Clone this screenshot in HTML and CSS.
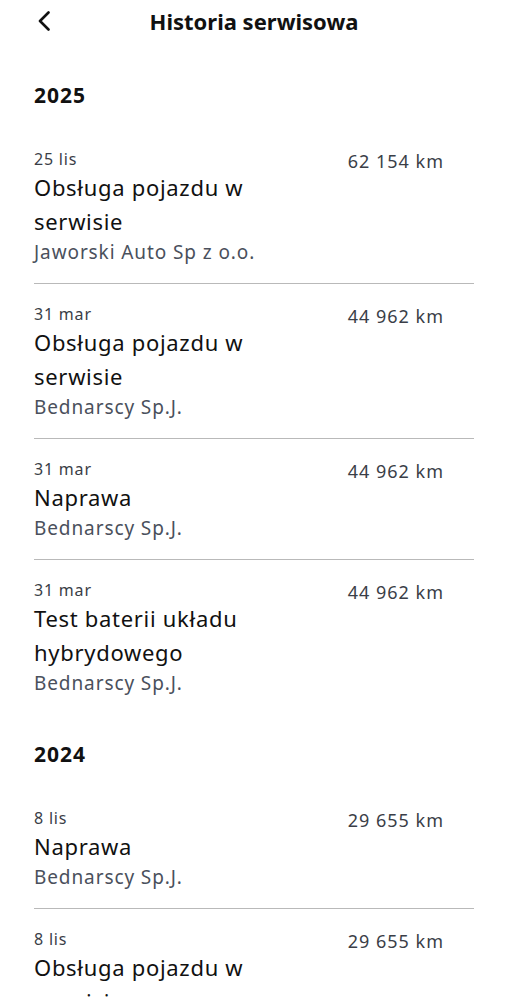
FILE: index.html
```html
<!DOCTYPE html>
<html lang="pl">
<head>
<meta charset="utf-8">
<title>Historia serwisowa</title>
<link rel="stylesheet" href="styles.css">
</head>
<body>
<header class="topbar">
  <button class="back" aria-label="Wstecz">
    <svg width="14" height="20" viewBox="0 0 14 20"><path d="M11.5 1.5 L3 10 L11.5 18.5" fill="none" stroke="#111" stroke-width="2.6" stroke-linecap="round" stroke-linejoin="round"/></svg>
  </button>
  <h1 class="title">Historia serwisowa</h1>
  <span></span>
</header>

<section class="year">
  <h2 class="year-label first">2025</h2>
  <ul class="list">
    <li class="item">
      <div class="info">
        <div class="date">25 lis</div>
        <div class="name">Obsługa pojazdu w serwisie</div>
        <div class="shop">Jaworski Auto Sp z o.o.</div>
      </div>
      <div class="km">62 154 km</div>
    </li>
    <li class="item">
      <div class="info">
        <div class="date">31 mar</div>
        <div class="name">Obsługa pojazdu w serwisie</div>
        <div class="shop">Bednarscy Sp.J.</div>
      </div>
      <div class="km">44 962 km</div>
    </li>
    <li class="item">
      <div class="info">
        <div class="date">31 mar</div>
        <div class="name">Naprawa</div>
        <div class="shop">Bednarscy Sp.J.</div>
      </div>
      <div class="km">44 962 km</div>
    </li>
    <li class="item">
      <div class="info">
        <div class="date">31 mar</div>
        <div class="name">Test baterii układu hybrydowego</div>
        <div class="shop">Bednarscy Sp.J.</div>
      </div>
      <div class="km">44 962 km</div>
    </li>
  </ul>
</section>

<section class="year">
  <h2 class="year-label">2024</h2>
  <ul class="list">
    <li class="item">
      <div class="info">
        <div class="date">8 lis</div>
        <div class="name">Naprawa</div>
        <div class="shop">Bednarscy Sp.J.</div>
      </div>
      <div class="km">29 655 km</div>
    </li>
    <li class="item">
      <div class="info">
        <div class="date">8 lis</div>
        <div class="name">Obsługa pojazdu w serwisie</div>
        <div class="shop">Bednarscy Sp.J.</div>
      </div>
      <div class="km">29 655 km</div>
    </li>
  </ul>
</section>
</body>
</html>
```
FILE: styles.css
```css
* { box-sizing: border-box; }
html, body { margin: 0; padding: 0; background: #fff; }
body {
  font-family: "Noto Sans", "Open Sans", sans-serif;
  color: #111;
  padding: 0 34px;
  height: 998px;
  overflow: hidden;
}
.topbar {
  height: 42px;
  display: grid;
  grid-template-columns: 60px 1fr 60px;
  align-items: center;
}
.back {
  background: none;
  border: 0;
  padding: 0 0 0 3px;
  margin: 0;
  height: 20px;
  display: flex;
  align-items: center;
  justify-content: flex-start;
  cursor: pointer;
}
.title {
  margin: 0;
  text-align: center;
  font-size: 22px;
  font-weight: 700;
  line-height: 28px;
}
.year-label {
  margin: 25px 0 19px;
  font-size: 21px;
  font-weight: 700;
  line-height: 30px;
  letter-spacing: 1px;
}
.year-label.first { margin-top: 38px; }
.list { list-style: none; margin: 0; padding: 0; }
.item {
  display: grid;
  grid-template-columns: 260px 1fr;
  align-items: start;
  padding: 19px 30px 18px 0;
  border-bottom: 1px solid #b9b9b9;
}
.list .item:last-child { border-bottom: 0; }
.date {
  font-size: 16px;
  line-height: 22px;
  letter-spacing: 0.8px;
  color: #3a3e47;
}
.name {
  font-size: 22px;
  line-height: 34px;
  letter-spacing: 0.7px;
  color: #111;
}
.shop {
  margin-top: 1px;
  font-size: 19px;
  line-height: 26px;
  letter-spacing: 0.9px;
  color: #4a505c;
}
.km {
  margin-top: 2px;
  text-align: right;
  font-size: 18px;
  line-height: 22px;
  letter-spacing: 1px;
  color: #3a3e47;
  white-space: nowrap;
}
```
